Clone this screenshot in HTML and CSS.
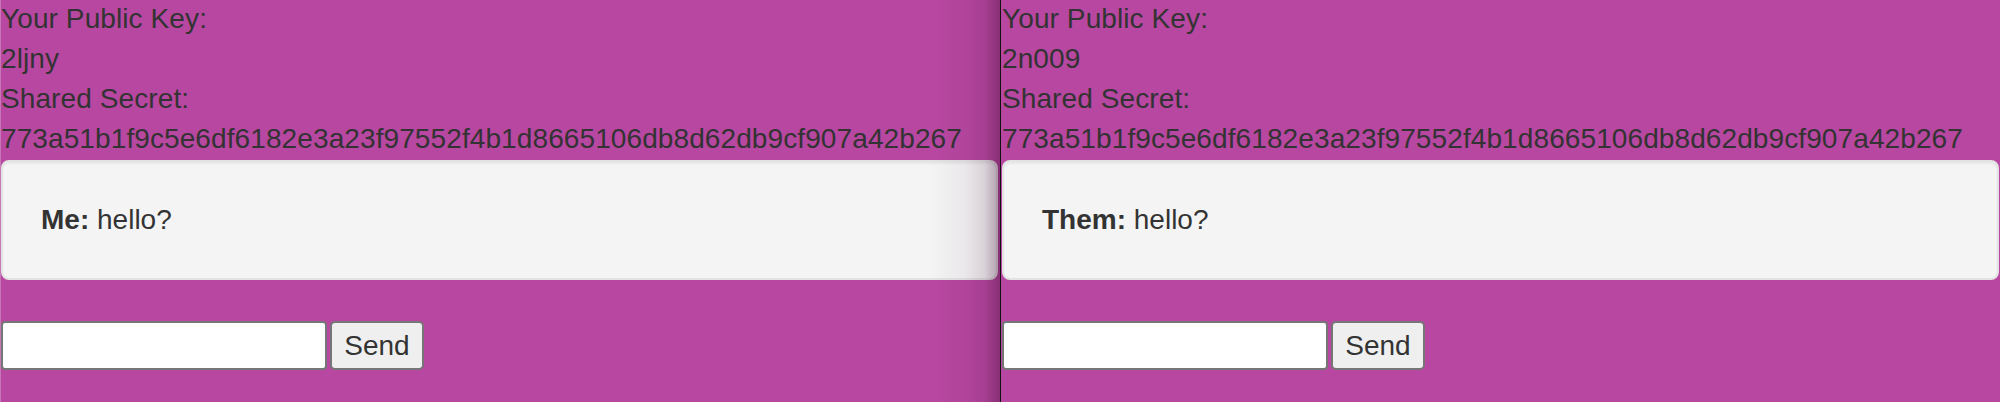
FILE: index.html
```html
<!DOCTYPE html>
<html>
<head>
<meta charset="utf-8">
<link rel="stylesheet" href="styles.css">
</head>
<body>
<div class="screen">
  <div class="pane pane-left">
    <div class="info">
      <div>Your Public Key:</div>
      <div>2ljny</div>
      <div>Shared Secret:</div>
      <div>773a51b1f9c5e6df6182e3a23f97552f4b1d8665106db8d62db9cf907a42b267</div>
    </div>
    <div class="well"><b>Me:</b> hello?</div>
    <form class="composer">
      <input class="msg" type="text">
      <button class="send" type="button">Send</button>
    </form>
    <div class="shade"></div>
  </div>
  <div class="divider"></div>
  <div class="pane pane-right">
    <div class="info">
      <div>Your Public Key:</div>
      <div>2n009</div>
      <div>Shared Secret:</div>
      <div>773a51b1f9c5e6df6182e3a23f97552f4b1d8665106db8d62db9cf907a42b267</div>
    </div>
    <div class="well"><b>Them:</b> hello?</div>
    <form class="composer">
      <input class="msg" type="text">
      <button class="send" type="button">Send</button>
    </form>
  </div>
</div>
</body>
</html>
```
FILE: styles.css
```css
html, body {
  margin: 0;
  padding: 0;
  background: #b847a1;
}
.screen {
  display: flex;
  width: 2000px;
  height: 402px;
  overflow: hidden;
  font-family: "Liberation Sans", Arial, Helvetica, sans-serif;
  font-size: 28px;
  line-height: 40px;
  color: #333;
}
.pane {
  position: relative;
  background: #b847a1;
  box-sizing: border-box;
}
.pane-left {
  width: 1000px;
  border-left: 1px solid #c877b6;
  padding-left: 0;
  padding-right: 2px;
}
.divider {
  width: 1px;
  background: #111;
}
.pane-right {
  flex: 1;
  padding-left: 1px;
  padding-right: 1px;
}
.info {
  margin-top: -1px;
  letter-spacing: 0.1px;
}
.well {
  margin-top: 1px;
  background: #f4f4f4;
  border: 2px solid #e3e3e3;
  border-radius: 8px;
  padding: 38px 38px;
  box-shadow: inset 0 2px 2px rgba(0,0,0,0.05);
}
.composer {
  display: flex;
  gap: 3px;
  margin: 41px 0 0 0;
}
.msg {
  box-sizing: border-box;
  width: 326px;
  height: 49px;
  margin: 0;
  background: #fff;
  border: 2px solid #767676;
  border-radius: 4px;
  padding: 2px 6px;
  font: inherit;
}
.send {
  box-sizing: border-box;
  width: 94px;
  height: 49px;
  margin: 0;
  background: #efefef;
  border: 2px solid #767676;
  border-radius: 5px;
  padding: 0;
  font-family: "Liberation Sans", Arial, Helvetica, sans-serif;
  font-size: 28px;
  color: #333;
}
.shade {
  position: absolute;
  top: 0;
  right: 0;
  bottom: 0;
  width: 70px;
  pointer-events: none;
  background: linear-gradient(to right, rgba(60,10,50,0) 0%, rgba(60,10,50,0.05) 50%, rgba(60,10,50,0.15) 78%, rgba(60,10,50,0.38) 100%);
}
```
